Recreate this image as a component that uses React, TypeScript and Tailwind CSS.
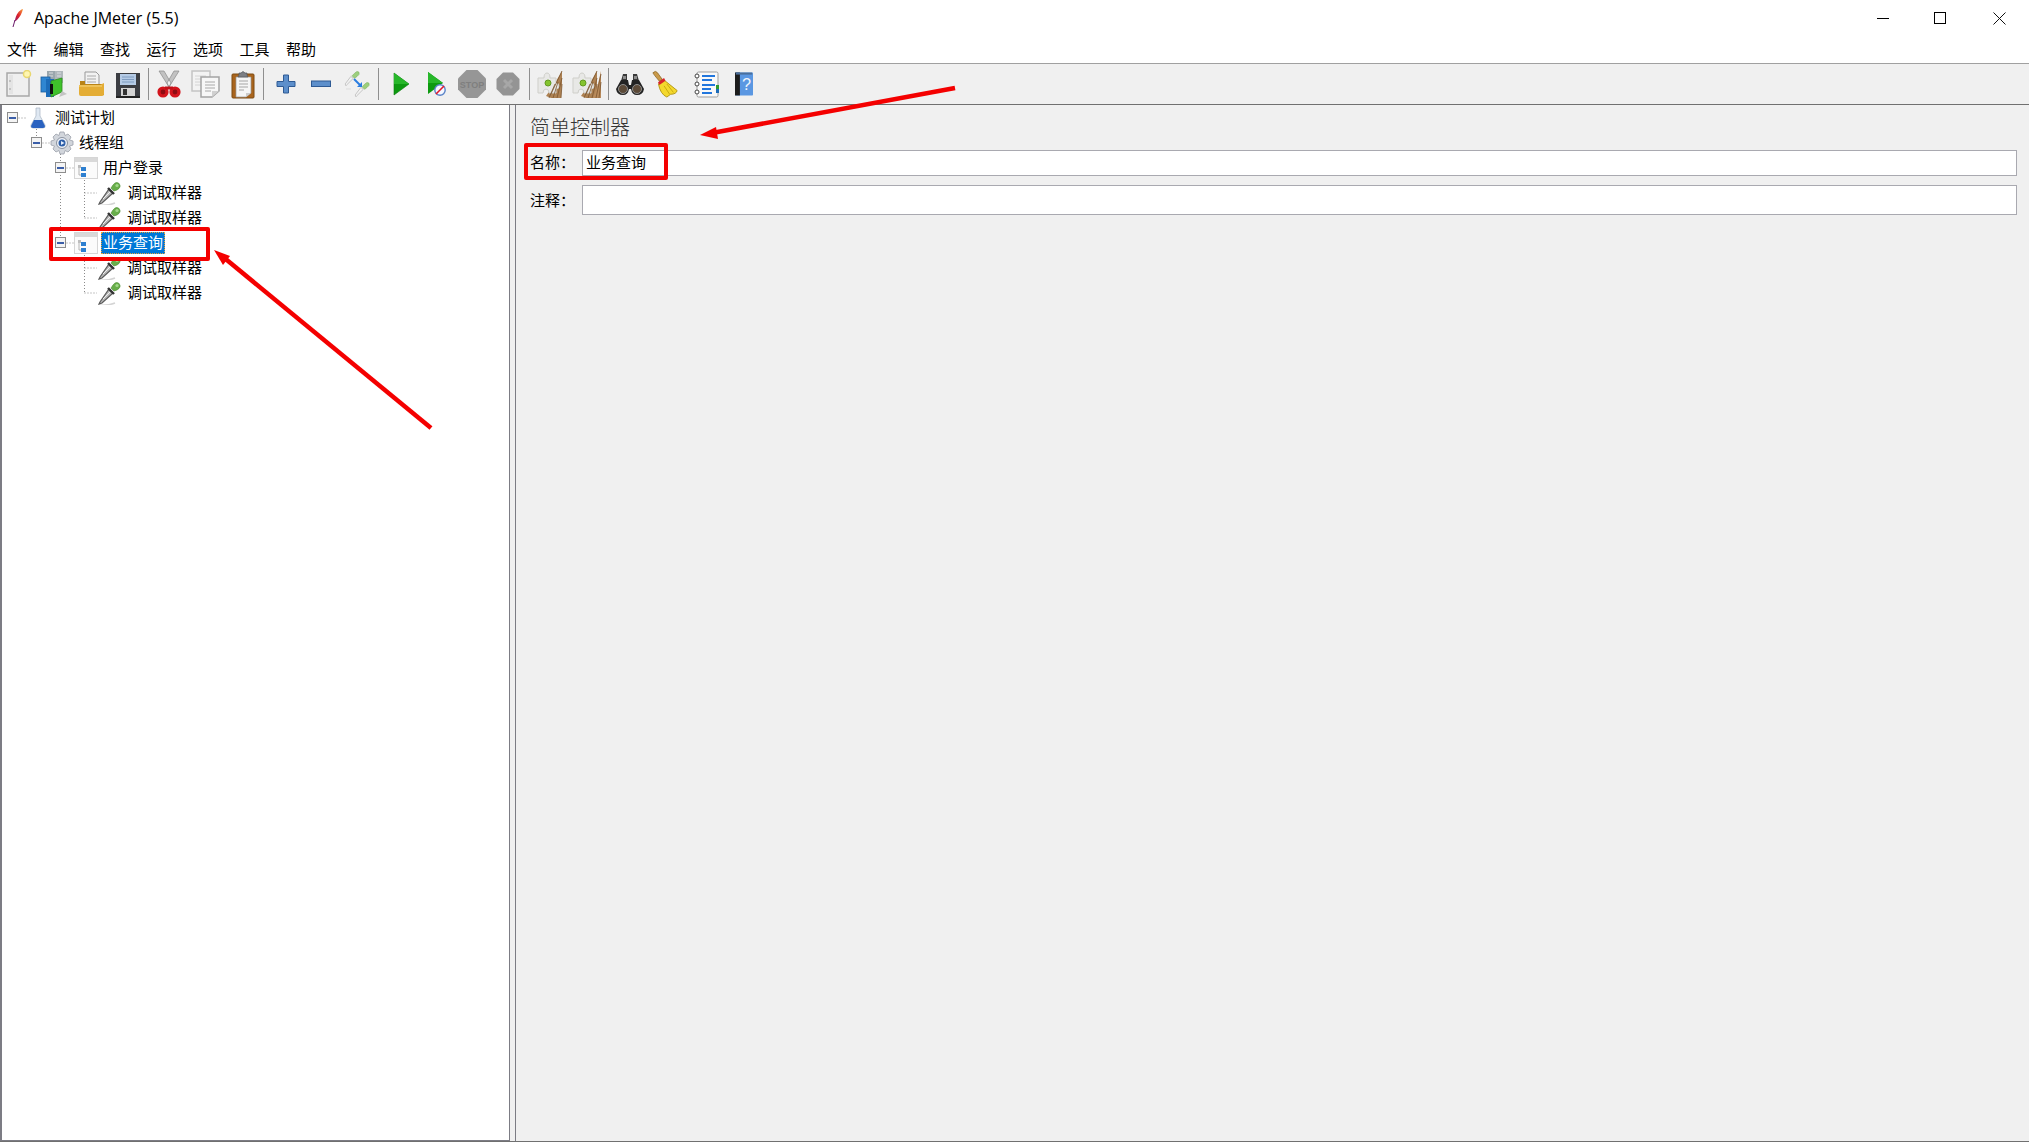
import React from "react";

const cjk = { fontFamily: '"Noto Sans CJK SC", "Noto Sans", sans-serif' };

function Feather() {
  return (
    <svg width="14" height="20" viewBox="0 0 14 20">
      <defs>
        <linearGradient id="fe" x1="0" y1="1" x2="1" y2="0">
          <stop offset="0" stopColor="#7a1a7a" />
          <stop offset="0.5" stopColor="#e0232b" />
          <stop offset="1" stopColor="#f7a13b" />
        </linearGradient>
      </defs>
      <path d="M12 1C8 2 5 7 4 12L3 14L6 12C9 9 11 5 12 1Z" fill="url(#fe)" />
      <path d="M4 12L2 19" stroke="#6a1a6a" strokeWidth="1" />
    </svg>
  );
}

function NewIcon() {
  return (
    <svg width="26" height="28" viewBox="0 0 26 28">
      <rect x="1" y="3" width="22" height="23" fill="#efefef" stroke="#a8a8a8" strokeWidth="1.5" />
      <rect x="3" y="5" width="4" height="19" fill="#e4e4e4" />
      <circle cx="4" cy="11" r="0.8" fill="#999" />
      <circle cx="4" cy="19" r="0.8" fill="#999" />
      <circle cx="21" cy="4" r="3.5" fill="#fff6b0" stroke="#e8d770" strokeWidth="1.5" />
    </svg>
  );
}

function TemplatesIcon() {
  return (
    <svg width="28" height="28" viewBox="0 0 28 28">
      <rect x="7" y="1" width="8" height="12" fill="#9aa6ac" />
      <rect x="15" y="1" width="8" height="12" fill="#b0b8bc" />
      <path d="M9 3H13M17 3H21M9 6H13M17 6H21" stroke="#d8dde0" />
      <rect x="1" y="7" width="9" height="15" fill="#2f86d2" stroke="#1b5c9c" strokeWidth="0.8" />
      <rect x="6" y="9" width="8" height="18" fill="#1c6cba" />
      <path d="M11 11L22 8V22L11 27Z" fill="#3fc22b" stroke="#2d8a1e" strokeWidth="0.8" />
      <rect x="10" y="14" width="3" height="10" fill="#111" />
      <path d="M22 21L27 24L19 27Z" fill="#c4c4c4" />
    </svg>
  );
}

function OpenIcon() {
  return (
    <svg width="28" height="28" viewBox="0 0 28 28">
      <path d="M7 2H18L21 5V15H7Z" fill="#f2f2f2" stroke="#999" />
      <path d="M9 6H18M9 9H18M9 12H18" stroke="#aaa" />
      <path d="M2 11H7V14H26V25H2Z" fill="#b98317" />
      <path d="M1 15H22L26 13L26 24Q26 26 24 26H3Q1 26 1 24Z" fill="#e4ad35" />
      <path d="M1 16H24" stroke="#f8d67c" />
    </svg>
  );
}

function SaveIcon() {
  return (
    <svg width="26" height="27" viewBox="0 0 26 27">
      <path d="M1 2H25V25H1Z" fill="#3b3d42" />
      <rect x="5" y="3" width="16" height="11" fill="#b5cbe6" />
      <path d="M7 6H19M7 8.500H19M7 11H19" stroke="#7f9cc0" />
      <rect x="6" y="17" width="14" height="8" fill="#d4d4d4" />
      <rect x="8" y="18" width="4" height="6" fill="#333" />
      <rect x="1" y="25" width="24" height="2" fill="#222" />
    </svg>
  );
}

function CutIcon() {
  return (
    <svg width="24" height="28" viewBox="0 0 24 28">
      <path d="M2 1L12 17L14 13L7 1ZM22 1L12 17L10 13L17 1Z" fill="#c2c2c2" stroke="#8a8a8a" strokeWidth="0.7" />
      <circle cx="6" cy="22" r="4" fill="#8e0c12" stroke="#d3141c" strokeWidth="3.2" />
      <circle cx="18" cy="22" r="4" fill="#8e0c12" stroke="#d3141c" strokeWidth="3.2" />
      <path d="M8 18L16 18" stroke="#c3121a" strokeWidth="3" />
    </svg>
  );
}

function CopyIcon() {
  return (
    <svg width="30" height="28" viewBox="0 0 30 28">
      <rect x="1" y="1" width="18" height="20" fill="#f3f3f3" stroke="#c4c4c4" strokeWidth="1.5" />
      <path d="M4 6H15M4 9H15M4 12H10M4 15H10" stroke="#d4d4d4" />
      <path d="M10 7H28V21L21 27H10Z" fill="#f7f7f7" stroke="#a4a4a4" strokeWidth="1.5" />
      <path d="M14 12H24M14 15H24M14 18H24M14 21H20" stroke="#a8a8a8" />
      <path d="M21 27V21H28Z" fill="#d0d0d0" />
    </svg>
  );
}

function PasteIcon() {
  return (
    <svg width="24" height="29" viewBox="0 0 24 29">
      <rect x="1" y="4" width="22" height="24" rx="1" fill="#a9641c" stroke="#7d4a12" />
      <path d="M5 7H20V23L15 27H5Z" fill="#f5f5f5" stroke="#999" strokeWidth="0.7" />
      <path d="M8 11H17M8 14H17M8 17H17M8 20H13" stroke="#a5a5a5" />
      <path d="M15 27V23H20Z" fill="#ccc" />
      <path d="M8 5V3H10Q12 0 14 3H16V5L17 7H7Z" fill="#7c7f84" stroke="#55585c" strokeWidth="0.7" />
    </svg>
  );
}

function PlusIcon() {
  return (
    <svg width="20" height="20" viewBox="0 0 20 20">
      <path d="M7.500 1H12.500V7.500H19V12.500H12.500V19H7.500V12.500H1V7.500H7.500Z" fill="#5d8fcb" stroke="#2e5a94" strokeWidth="1" />
    </svg>
  );
}

function MinusIcon() {
  return (
    <svg width="20" height="8" viewBox="0 0 20 8">
      <rect x="0.500" y="1" width="19" height="5.500" fill="#5d8fcb" stroke="#2e5a94" strokeWidth="1" />
    </svg>
  );
}

function Dropper() {
  return (
    <svg width="24" height="24" viewBox="0 0 24 24">
      <path d="M1 24Q9 25 17 22" stroke="#d4d4d4" strokeWidth="1.500" fill="none" />
      <path d="M2 21L1 23L4 22L15 12L11 8Z" fill="#b8b8b8" stroke="#5a5a5a" strokeWidth="1.200" />
      <path d="M5 18L12 11" stroke="#efefef" strokeWidth="1" />
      <path d="M10 7L16 13" stroke="#333" strokeWidth="2.400" />
      <path d="M13 7L15 4Q18 0 21 2.500Q24 6 19 9L16 10Z" fill="#68ae4a" stroke="#4a8a32" strokeWidth="0.600" />
      <circle cx="19" cy="4.500" r="1.600" fill="#a3d98a" />
    </svg>
  );
}

function ToggleIcon() {
  return (
    <svg width="28" height="28" viewBox="0 0 28 28">
      <g transform="translate(1 -1) scale(0.62)"><path d="M3 27L4 26L15 15L11 12L2 24Z" fill="#f2f2f2" stroke="#bbb" strokeWidth="1.300" /><path d="M13 11L17 7Q21 2 24 5Q26 9 21 12L17 15Z" fill="#9ccf7d" stroke="#83b566" /></g>
      <path d="M8 19H3" stroke="#ddd" />
      <g transform="translate(11 10) scale(0.62)"><path d="M3 27L4 26L15 15L11 12L2 24Z" fill="#f2f2f2" stroke="#bbb" strokeWidth="1.300" /><path d="M13 11L17 7Q21 2 24 5Q26 9 21 12L17 15Z" fill="#9ccf7d" stroke="#83b566" /></g>
      <path d="M11 9L17 15" stroke="#2a7de1" strokeWidth="2" />
      <path d="M19 12V17H14Z" fill="#2a7de1" />
    </svg>
  );
}

function RunIcon() {
  return (
    <svg width="17" height="24" viewBox="0 0 17 24">
      <path d="M1 1L16 12L1 23Z" fill="#0d9a10" stroke="#0a7a0d" strokeWidth="0.600" />
      <path d="M1 1L16 12H1Z" fill="#27b72a" />
    </svg>
  );
}

function RunNoTimerIcon() {
  return (
    <svg width="19" height="26" viewBox="0 0 19 26">
      <path d="M1 1L16 12L1 23Z" fill="#0d9a10" />
      <path d="M1 1L16 12H1Z" fill="#27b72a" />
      <circle cx="13" cy="19" r="5.200" fill="#f4f7ff" stroke="#5a83c8" strokeWidth="1.400" />
      <path d="M9 23L17 15" stroke="#e2182a" strokeWidth="1.600" />
    </svg>
  );
}

function StopIcon() {
  return (
    <svg width="28" height="28" viewBox="0 0 28 28">
      <path d="M8.500 0H19.500L28 8.500V19.500L19.500 28H8.500L0 19.500V8.500Z" fill="#969696" />
      <text x="14" y="18" textAnchor="middle" fontSize="9" fontWeight="700" fill="#7f7f7f" fontFamily="Liberation Sans">STOP</text>
    </svg>
  );
}

function ShutIcon() {
  return (
    <svg width="24" height="24" viewBox="0 0 24 24">
      <path d="M7 0.500H17L23.500 7V17L17 23.500H7L0.500 17V7Z" fill="#949494" />
      <path d="M8 8L16 16M16 8L8 16" stroke="#a7a7a7" strokeWidth="3" />
    </svg>
  );
}

function ClearIcon({ wide = false }: { wide?: boolean }) {
  return (
    <svg width={wide ? 30 : 26} height="29" viewBox={wide ? "0 0 30 29" : "0 0 26 29"}>
      <path d="M25 1L18 13L9 26L14 28H24L25 14Z" fill="#ad8152" />
      <path d="M1 8H7Q7 3 10 3Q13 3 13 8H19V13Q22 13 22 16Q22 19 19 19V23H12Q12 19 9 19Q6 19 6 23H1Z" fill="#e8e8e6" stroke="#cfcfca" />
      <circle cx="11" cy="13" r="3" fill="#84c42e" stroke="#639a20" />
      <path d="M25 1L14 24M25 8L20 28M25 14L24 28M18 14L12 28M21 12L16 28" stroke="#7b5530" strokeWidth="0.800" />
      {wide && (
        <>
          <path d="M29 1L26 14L21 28H29Z" fill="#b98b5c" />
          <path d="M29 4L24 28M29 12L27 28" stroke="#7b5530" strokeWidth="0.800" />
        </>
      )}
    </svg>
  );
}

function BinocIcon() {
  return (
    <svg width="30" height="23" viewBox="0 0 30 23">
      <path d="M8 1H12V8H18V1H22L24 8H6Z" fill="#3a3a3a" />
      <path d="M6 7H13L14 12H16L17 7H24L29 16Q28 22 22 22Q17 22 16 16H14Q13 22 8 22Q2 22 1 16Z" fill="#232323" />
      <circle cx="8" cy="16" r="4.500" fill="#5c4a38" stroke="#8d8d8d" />
      <circle cx="22" cy="16" r="4.500" fill="#5c4a38" stroke="#8d8d8d" />
      <rect x="8" y="3" width="3" height="3" fill="#8d8d8d" />
      <rect x="19" y="3" width="3" height="3" fill="#8d8d8d" />
    </svg>
  );
}

function BroomIcon() {
  return (
    <svg width="30" height="30" viewBox="0 0 30 30">
      <path d="M2 3Q5 0 7 3L12 10L9 12L4 6Z" fill="#c99a4a" stroke="#8b6424" strokeWidth="0.800" />
      <path d="M13 10L28 22Q27 26 21 26L17 29Q10 26 8 15Z" fill="#f4d82c" stroke="#b09614" />
      <path d="M14 17L20 26M17 15L24 24" stroke="#c6a80f" />
      <path d="M7.500 13L14 8.500L15.500 11.500L9 16Z" fill="#d8242a" />
    </svg>
  );
}

function LogIcon() {
  return (
    <svg width="26" height="27" viewBox="0 0 26 27">
      <rect x="3" y="1" width="21" height="25" rx="1.500" fill="#f8f8f8" stroke="#9d9d9d" />
      <path d="M8 5H21M8 9H18M8 14H21M8 18H17M8 22H18" stroke="#2176dd" strokeWidth="2" />
      <circle cx="3" cy="5" r="2" fill="#fff" stroke="#444" />
      <circle cx="3" cy="13" r="2" fill="#fff" stroke="#444" />
      <circle cx="3" cy="21" r="2" fill="#fff" stroke="#444" />
      <rect x="22" y="14" width="3" height="4" fill="#2c9b30" />
      <rect x="22" y="18" width="3" height="4" fill="#1c6bb8" />
    </svg>
  );
}

function HelpIcon() {
  return (
    <svg width="22" height="28" viewBox="0 0 22 28">
      <rect x="0" y="0" width="22" height="28" rx="1" fill="#5a97e2" />
      <rect x="0" y="0" width="6" height="28" fill="#1c1c1c" />
      <path d="M1 0H21V2.500H1Z" fill="#4a6f9c" />
      <text x="14" y="21" textAnchor="middle" fontSize="20" fill="#eef4fc" fontFamily="Liberation Sans">?</text>
    </svg>
  );
}

function Sep({ className }: { className: string }) {
  return (
    <div className={`flex flex-none justify-center ${className}`}>
      <div className="h-[32px] w-px bg-[#8f8f8f]" />
    </div>
  );
}

function Tool({ className, children }: { className: string; children: React.ReactNode }) {
  return <div className={`flex flex-none items-center justify-center ${className}`}>{children}</div>;
}

function Flask() {
  return (
    <svg width="18" height="22" viewBox="0 0 18 22">
      <path d="M7 1H11V9L16 18Q17 21 14 21H4Q1 21 2 18L7 9Z" fill="#dfe8f2" stroke="#a6b3c2" strokeWidth="0.700" />
      <path d="M5 13H13L16 19Q16 21 14 21H4Q2 21 2 19Z" fill="#2a62c0" />
    </svg>
  );
}

function Gear() {
  return (
    <svg width="24" height="24" viewBox="0 0 24 24">
      <path d="M10 1H14L15 4.500L18 3L21 6L19.500 9L23 10V14L19.500 15L21 18L18 21L15 19.500L14 23H10L9 19.500L6 21L3 18L4.500 15L1 14V10L4.500 9L3 6L6 3L9 4.500Z" fill="#d2d6dc" stroke="#9aa0aa" strokeWidth="0.800" />
      <circle cx="12" cy="12" r="5.500" fill="#eef2f8" stroke="#8a92a0" />
      <circle cx="12" cy="12" r="3.500" fill="#2c5ea8" />
      <path d="M11 10L14.500 12L11 14Z" fill="#e6eefb" />
    </svg>
  );
}

function Simple() {
  return (
    <svg width="24" height="22" viewBox="0 0 24 22">
      <rect x="0.500" y="0.500" width="23" height="21" fill="#fbfbfb" stroke="#d6d6d6" />
      <rect x="1" y="1" width="22" height="4" fill="#d9d9d9" />
      <path d="M5 9V18H8" stroke="#b5b5b5" fill="none" />
      <rect x="4" y="8" width="3" height="3" fill="#bdbdbd" />
      <rect x="7" y="10" width="5" height="4" fill="#2d7fd0" />
      <rect x="7" y="16" width="5" height="4" fill="#2d7fd0" />
    </svg>
  );
}

function Row({
  depth,
  icon,
  label,
  box = true,
  selected = false,
}: {
  depth: string;
  icon: React.ReactNode;
  label: string;
  box?: boolean;
  selected?: boolean;
}) {
  return (
    <div className={`flex h-[25px] items-center ${depth}`}>
      {box ? (
        <div className="flex h-[11px] w-[11px] flex-none items-center justify-center border border-[#8d8d8d] bg-[#f4f4f4]">
          <div className="h-[2px] w-[7px] bg-[#3b5ea8]" />
        </div>
      ) : (
        <div className="w-[11px] flex-none" />
      )}
      <div className="ml-[8px] flex h-[25px] w-[24px] flex-none items-center justify-center">{icon}</div>
      {selected ? (
        <div className="ml-[3px] flex h-[22px] items-center border border-dotted border-[#e8a33d] bg-[#0078d7] px-px text-[15px] text-white">
          {label}
        </div>
      ) : (
        <div className="ml-[5px] text-[15px] text-black">{label}</div>
      )}
    </div>
  );
}

function TreeGuides() {
  const c = "#8a8a8a";
  const d = "1 2";
  return (
    <svg className="pointer-events-none absolute -left-[2px] top-0" width="200" height="200" viewBox="0 105 200 200">
      <g stroke={c} strokeDasharray={d} fill="none">
        <path d="M18.500 118H26M36.500 126V138M42.500 143H50M60.500 151V238M66.500 168H74M66.500 243H74" />
        <path d="M84.500 180V218M84.500 193H97M84.500 218H97M84.500 255V293M84.500 268H97M84.500 293H97" />
      </g>
    </svg>
  );
}

function Field({ label, value, h, labelClass = "" }: { label: string; value?: string; h: string; labelClass?: string }) {
  return (
    <div className="flex items-center">
      <div className={`w-[52px] flex-none text-[15px] text-black ${labelClass}`}>{label}</div>
      <div className={`flex flex-1 items-center border border-[#a9a9b0] bg-white pb-[2px] pl-[3px] text-[15px] text-black ${h}`}>{value}</div>
    </div>
  );
}

export default function App() {
  return (
    <div className="relative flex h-[1142px] w-[2029px] flex-col overflow-hidden bg-white" style={cjk}>
      {/* title bar */}
      <div className="flex h-[36px] flex-none items-center">
        <div className="ml-[11px] flex w-[23px] flex-none items-center">
          <Feather />
        </div>
        <div className="text-[16px] text-black" style={{ fontFamily: '"Open Sans", sans-serif' }}>
          Apache JMeter (5.5)
        </div>
        <div className="ml-auto flex pr-[1px]">
          <div className="flex h-[36px] w-[58px] items-center justify-center">
            <div className="h-px w-[12px] bg-black" />
          </div>
          <div className="flex h-[36px] w-[58px] items-center justify-center pr-[2px]">
            <div className="h-[12px] w-[12px] border border-black" />
          </div>
          <div className="flex h-[36px] w-[58px] items-center justify-center">
            <svg width="13" height="13" viewBox="0 0 13 13">
              <path d="M0.500 0.500L12.500 12.500M12.500 0.500L0.500 12.500" stroke="#111" strokeWidth="1" />
            </svg>
          </div>
        </div>
      </div>
      {/* menu */}
      <div className="flex h-[28px] flex-none items-center gap-[16.500px] border-b border-[#a0a0a0] pl-[7px] text-[15px] text-black">
        <span>文件</span>
        <span>编辑</span>
        <span>查找</span>
        <span>运行</span>
        <span>选项</span>
        <span>工具</span>
        <span>帮助</span>
      </div>
      {/* toolbar */}
      <div className="flex h-[41px] flex-none items-center border-b border-[#707070] bg-[#f0f0f0]">
        <Tool className="w-[37px]"><NewIcon /></Tool>
        <Tool className="w-[34px]"><TemplatesIcon /></Tool>
        <Tool className="w-[42px]"><OpenIcon /></Tool>
        <Tool className="w-[29px]"><SaveIcon /></Tool>
        <Sep className="w-[12px]" />
        <Tool className="w-[30px]"><CutIcon /></Tool>
        <Tool className="w-[44px]"><CopyIcon /></Tool>
        <Tool className="w-[29px]"><PasteIcon /></Tool>
        <Sep className="w-[12px]" />
        <Tool className="w-[33px]"><PlusIcon /></Tool>
        <Tool className="w-[38px]"><MinusIcon /></Tool>
        <Tool className="w-[33px]"><ToggleIcon /></Tool>
        <Sep className="w-[10px]" />
        <Tool className="w-[36px]"><RunIcon /></Tool>
        <Tool className="w-[34px]"><RunNoTimerIcon /></Tool>
        <Tool className="w-[38px]"><StopIcon /></Tool>
        <Tool className="w-[34px]"><ShutIcon /></Tool>
        <Sep className="w-[8px]" />
        <Tool className="w-[34px]"><ClearIcon /></Tool>
        <Tool className="w-[40px]"><ClearIcon wide /></Tool>
        <Sep className="w-[2px]" />
        <Tool className="w-[42px]"><BinocIcon /></Tool>
        <Tool className="w-[28px]"><BroomIcon /></Tool>
        <Tool className="w-[56px]"><LogIcon /></Tool>
        <Tool className="w-[18px]"><HelpIcon /></Tool>
      </div>
      {/* main */}
      <div className="flex min-h-0 flex-1 border-b border-[#707070] bg-[#f0f0f0]">
        <div className="relative w-[510px] flex-none border-b border-l-2 border-r border-[#7c7c84] bg-white">
          <TreeGuides />
          <div className="relative">
            <Row depth="pl-[5px]" icon={<Flask />} label="测试计划" />
            <Row depth="pl-[29px]" icon={<Gear />} label="线程组" />
            <Row depth="pl-[53px]" icon={<Simple />} label="用户登录" />
            <Row depth="pl-[77px]" icon={<Dropper />} label="调试取样器" box={false} />
            <Row depth="pl-[77px]" icon={<Dropper />} label="调试取样器" box={false} />
            <Row depth="pl-[53px]" icon={<Simple />} label="业务查询" selected />
            <Row depth="pl-[77px]" icon={<Dropper />} label="调试取样器" box={false} />
            <Row depth="pl-[77px]" icon={<Dropper />} label="调试取样器" box={false} />
          </div>
        </div>
        <div className="ml-[5px] flex flex-1 flex-col border-l border-[#7c7c84] pl-[14px] pr-[12px] pt-[7px]">
          <div className="h-[30px] text-[20px] font-light leading-[30px] text-[#333333]">简单控制器</div>
          <div className="mt-[8px]">
            <Field label="名称：" value="业务查询" h="h-[26px]" labelClass="pb-[2px]" />
          </div>
          <div className="mt-[9px]">
            <Field label="注释：" h="h-[30px]" />
          </div>
        </div>
      </div>
      {/* annotations */}
      <div className="absolute left-[49px] top-[227px] h-[34px] w-[161px] rounded-[2px] border-[4px] border-[#f40000]" />
      <div className="absolute left-[524px] top-[143px] h-[37px] w-[144px] rounded-[2px] border-[4px] border-[#f40000]" />
      <svg className="pointer-events-none absolute left-0 top-0" width="2029" height="1142" viewBox="0 0 2029 1142">
        <path d="M955 88L712 133" stroke="#f40000" strokeWidth="4.500" />
        <path d="M700 135L716 127L718 139Z" fill="#f40000" />
        <path d="M431 428L222 256" stroke="#f40000" strokeWidth="4.500" />
        <path d="M214 250L230 256L223 265Z" fill="#f40000" />
      </svg>
    </div>
  );
}
